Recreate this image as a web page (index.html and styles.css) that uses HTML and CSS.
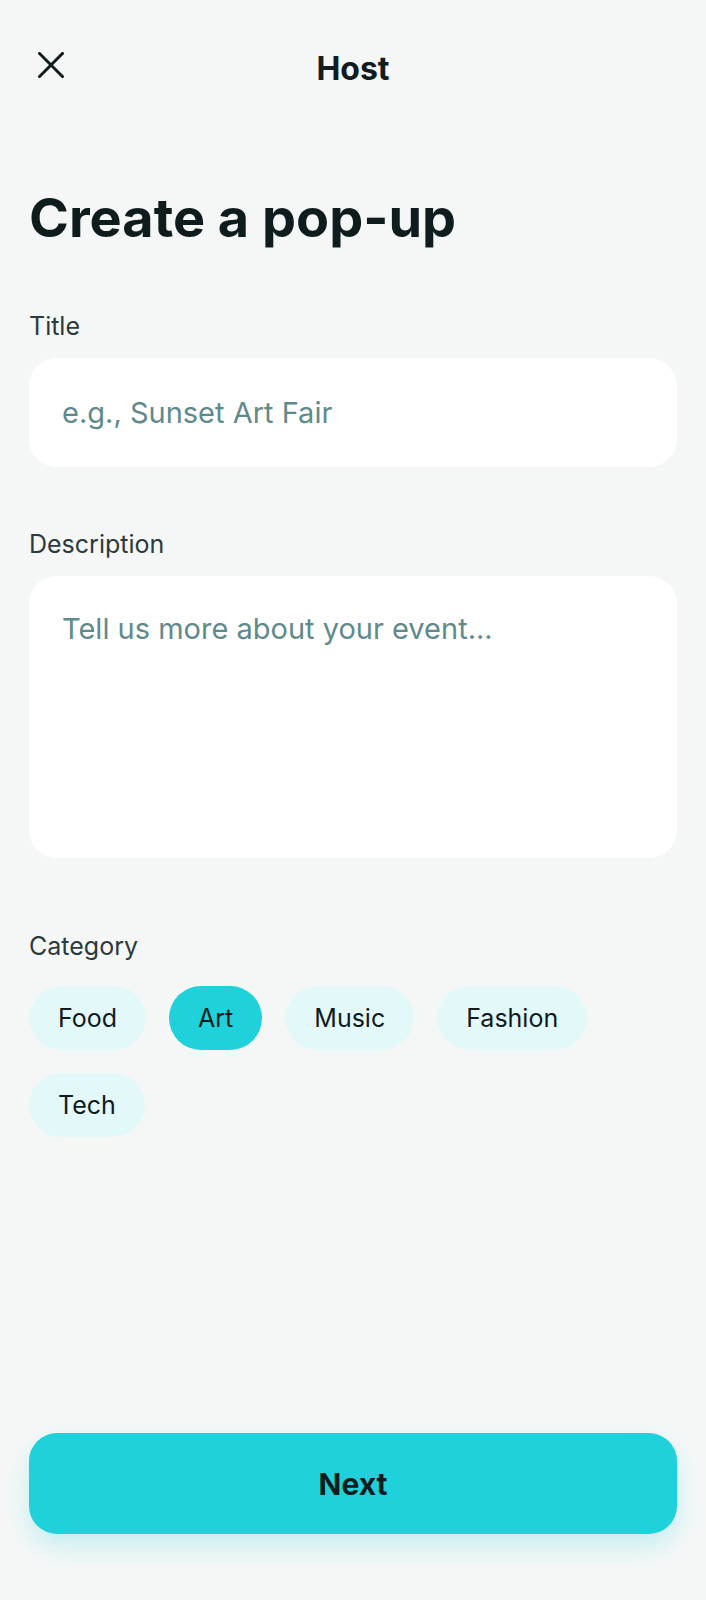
FILE: index.html
```html
<!DOCTYPE html>
<html lang="en">
<head>
<meta charset="utf-8">
<title>Host - Create a pop-up</title>
<link rel="stylesheet" href="styles.css">
</head>
<body>
<div class="page">
  <header class="topbar">
    <button class="close" aria-label="Close">
      <svg width="26" height="26" viewBox="0 0 26 26" fill="none" stroke="#111c1e" stroke-width="3" stroke-linecap="square">
        <line x1="1.5" y1="1.5" x2="24.5" y2="24.5"/>
        <line x1="24.5" y1="1.5" x2="1.5" y2="24.5"/>
      </svg>
    </button>
    <div class="topbar-title">Host</div>
    <div class="spacer"></div>
  </header>

  <main class="content">
    <h1 class="heading">Create a pop-up</h1>

    <div class="field">
      <label class="label">Title</label>
      <div class="input">e.g., Sunset Art Fair</div>
    </div>

    <div class="field">
      <label class="label">Description</label>
      <div class="input textarea">Tell us more about your event...</div>
    </div>

    <div class="field field-category">
      <label class="label">Category</label>
      <div class="chips">
        <span class="chip">Food</span>
        <span class="chip chip-active">Art</span>
        <span class="chip">Music</span>
        <span class="chip">Fashion</span>
        <span class="chip">Tech</span>
      </div>
    </div>
  </main>

  <footer class="footer">
    <button class="next">Next</button>
  </footer>
</div>
</body>
</html>
```

FILE: styles.css
```css
* { box-sizing: border-box; }

html, body {
  margin: 0;
  padding: 0;
  background: #f5f7f7;
}

body {
  font-family: Inter, "Noto Sans", "Liberation Sans", sans-serif;
  color: #0f1c1e;
}

.page {
  min-height: 1600px;
  display: flex;
  flex-direction: column;
  padding: 0 29px;
}

.topbar {
  height: 138px;
  display: grid;
  grid-template-columns: 60px 1fr 60px;
  align-items: center;
}

.close {
  background: none;
  border: 0;
  padding: 0;
  margin: 0 0 8px 9px;
  width: 26px;
  height: 26px;
  display: flex;
  cursor: pointer;
}

.topbar-title {
  text-align: center;
  font-size: 32px;
  line-height: 36px;
  font-weight: 700;
  color: #111c1e;
}

.content {
  display: flex;
  flex-direction: column;
}

.heading {
  margin: 47px 0 0;
  font-size: 54px;
  line-height: 65px;
  font-weight: 700;
  letter-spacing: 0;
  color: #0f1c1e;
}

.field {
  display: flex;
  flex-direction: column;
  gap: 17px;
  margin-top: 61px;
}

.field + .field { margin-top: 62px; }
.field + .field-category { margin-top: 73px; }

.label {
  font-size: 25px;
  line-height: 30px;
  color: #2b3a3c;
}

.input {
  background: #ffffff;
  border-radius: 28px;
  height: 109px;
  padding: 0 33px;
  display: flex;
  align-items: center;
  font-size: 29px;
  color: #5f8a8c;
}

.textarea {
  height: 282px;
  align-items: flex-start;
  padding-top: 33px;
  line-height: 40px;
}

.field-category { gap: 25px; }

.chips {
  display: flex;
  flex-wrap: wrap;
  gap: 23px;
}

.chip {
  height: 64px;
  padding: 0 29px;
  border-radius: 32px;
  background: #e3f8f9;
  display: flex;
  align-items: center;
  font-size: 25px;
  color: #111a1c;
}

.chip-active {
  background: #1ed1db;
}

.footer {
  margin-top: auto;
  padding-bottom: 66px;
}

.next {
  width: 100%;
  height: 101px;
  border: 0;
  border-radius: 28px;
  background: #1ed1db;
  color: #0f1c1e;
  font-family: inherit;
  font-size: 30px;
  font-weight: 700;
  box-shadow: 0 12px 26px rgba(30, 209, 219, 0.22);
  cursor: pointer;
}
```
